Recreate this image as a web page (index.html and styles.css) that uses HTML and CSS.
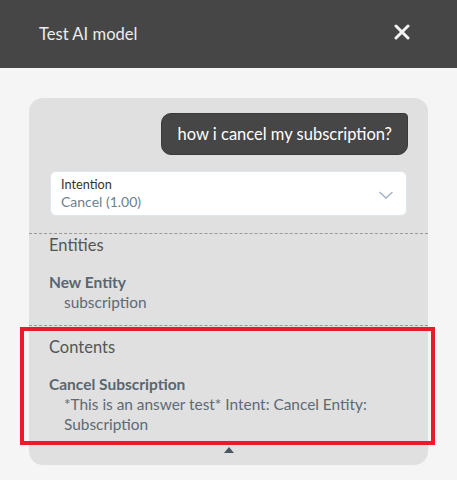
FILE: index.html
```html
<!DOCTYPE html>
<html lang="en">
<head>
    <meta charset="UTF-8">
    <meta name="viewport" content="width=device-width, initial-scale=1.0">
    <title>Test AI model</title>
    <link rel="stylesheet" href="styles.css">
</head>
<body>

    <div class="header">
        <span class="header-title">Test AI model</span>
        <svg class="close-icon" width="16" height="16" viewBox="0 0 16 16">
            <path d="M2 2 L14 14 M14 2 L2 14" stroke="#f2f2f2" stroke-width="3" stroke-linecap="round"/>
        </svg>
    </div>

    <div class="content">
        <div class="test-card">
            <div class="bubble-row">
                <div class="bubble">how i cancel my subscription?</div>
            </div>

            <div class="select-box">
                <div class="select-text">
                    <div class="select-label">Intention</div>
                    <div class="select-value">Cancel (1.00)</div>
                </div>
                <svg class="chevron" width="14" height="8" viewBox="0 0 14 8">
                    <path d="M0.5 1 L7 7 L13.5 1" fill="none" stroke="#9fb0c2" stroke-width="1.3"/>
                </svg>
            </div>

            <div class="section">
                <div class="section-title">Entities</div>
                <div class="item-name">New Entity</div>
                <div class="item-value">subscription</div>
            </div>

            <div class="section section-highlight">
                <div class="section-title">Contents</div>
                <div class="item-name">Cancel Subscription</div>
                <div class="item-value">*This is an answer test* Intent: Cancel Entity: Subscription</div>
                <div class="highlight-box"></div>
            </div>

            <div class="collapse-row">
                <svg width="10" height="6" viewBox="0 0 10 6">
                    <path d="M5 0 L10 6 L0 6 Z" fill="#4b5661"/>
                </svg>
            </div>
        </div>
    </div>

</body>
</html>
```

FILE: styles.css
```css
body {
    font-family: 'Lato', sans-serif;
    background: #f5f5f5;
    margin: 0;
}

.header {
    background: #464646;
    height: 68px;
    display: flex;
    align-items: center;
    justify-content: space-between;
    padding: 0 47px 0 39px;
}

.header-title {
    color: #ececec;
    font-size: 16.6px;
    padding-bottom: 1px;
}

.close-icon {
    margin-top: -4px;
}

.content {
    padding: 30px 29px 15px 29px;
}

.test-card {
    background: #e0e0e0;
    border-radius: 14px;
    padding-top: 15px;
}

.bubble-row {
    display: flex;
    justify-content: flex-end;
    padding: 0 20px;
}

.bubble {
    background: #464646;
    color: #ffffff;
    font-size: 16.5px;
    border-radius: 10px 4px 10px 10px;
    border: 1px solid #3a3a3a;
    padding: 0 15px 0 16px;
    height: 40px;
    line-height: 40px;
}

.select-box {
    background: #ffffff;
    margin: 16px 21px 17px 21px;
    border-radius: 6px;
    height: 45px;
    display: flex;
    align-items: center;
    justify-content: space-between;
    padding: 0 13px 0 10px;
    border: 1px solid #dfe6ec;
    box-sizing: border-box;
}

.select-label {
    font-size: 12.7px;
    color: #333;
    line-height: 16px;
}

.select-value {
    font-size: 14px;
    color: #6e7f8f;
    line-height: 19px;
}

.chevron {
    margin-top: 2px;
}

.section {
    border-top: 1px dashed #9a9a9a;
    padding: 0 20px 13px 20px;
    position: relative;
}

.section-title {
    font-size: 16.5px;
    color: #555;
    line-height: 21px;
    padding-top: 1px;
    margin-bottom: 16px;
}

.item-name {
    font-size: 15.5px;
    font-weight: bold;
    color: #5a6670;
    line-height: 20px;
}

.item-value {
    font-size: 15.4px;
    color: #5d6a75;
    line-height: 20px;
    padding-left: 15px;
    padding-right: 30px;
}

.section-highlight {
    padding-top: 10px;
    padding-bottom: 7px;
}

.highlight-box {
    position: absolute;
    left: -9px;
    right: -7px;
    top: 1px;
    bottom: -4px;
    border: 4px solid #ea1b25;
}

.collapse-row {
    display: flex;
    justify-content: center;
    padding: 6px 0 12px 0;
}
```
